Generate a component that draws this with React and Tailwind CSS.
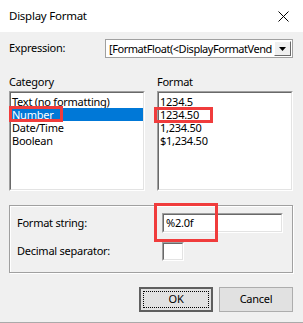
const sunkenOuter = 'border border-t-[#a0a0a0] border-l-[#a0a0a0] border-r-white border-b-white'
const sunkenInner = 'border border-t-[#696969] border-l-[#696969] border-r-[#e3e3e3] border-b-[#e3e3e3] bg-white'

function Sunken({ className = '', innerClassName = '', children }) {
  return (
    <div className={`${sunkenOuter} ${className}`}>
      <div className={`${sunkenInner} h-full w-full ${innerClassName}`}>{children}</div>
    </div>
  )
}

function ListBox({ items, selected, mark }) {
  return (
    <Sunken className="h-[100px] w-full">
      <div className="relative flex flex-col pt-[2px]">
        {items.map((item, i) => (
          <div
            key={item}
            className={`h-[13px] leading-[13px] pl-[1px] whitespace-nowrap ${i === selected ? 'bg-[#0078d7] text-white' : 'text-black'}`}
          >
            {item}
          </div>
        ))}
        {mark}
      </div>
    </Sunken>
  )
}

function Button({ children, isDefault }) {
  return (
    <button
      className={`relative w-[74px] h-[25px] bg-[#e1e1e1] flex items-center justify-center ${
        isDefault ? 'border-2 border-[#5f5f5f]' : 'border border-[#adadad]'
      }`}
    >
      {isDefault && <span className="absolute inset-[2px] border border-dotted border-black" />}
      <span className="relative">{children}</span>
    </button>
  )
}

export default function App() {
  return (
    <div
      className="w-[303px] h-[323px] bg-[#f0f0f0] flex flex-col text-[11px] tracking-[-0.25px] text-black border-b border-[#aaaaaa] overflow-hidden"
      style={{ fontFamily: '"Noto Sans", "Liberation Sans", sans-serif' }}
    >
      {/* Title bar */}
      <div className="h-[32px] bg-white flex items-center justify-between pl-[9px] pr-[14px] shrink-0">
        <span className="text-[11.5px]">Display Format</span>
        <svg width="11" height="11" viewBox="0 0 11 11" className="text-black">
          <path d="M0.5 0.5 L10.5 10.5 M10.5 0.5 L0.5 10.5" stroke="currentColor" strokeWidth="1" />
        </svg>
      </div>

      <div className="flex flex-col pl-[9px] pr-[10px]">
        {/* Expression */}
        <div className="mt-[7px] h-[19px] flex items-center">
          <span className="w-[96px] shrink-0">Expression:</span>
          <div className="flex-1 min-w-0 h-[19px] border border-[#a0a0a0] bg-white flex items-stretch">
            <span className="flex-1 min-w-0 pl-[3px] leading-[17px] tracking-[-0.45px] overflow-hidden whitespace-nowrap">
              [FormatFloat(&lt;DisplayFormatVend
            </span>
            <div className="w-[17px] shrink-0 my-[1px] mr-[1px] border border-t-white border-l-white border-r-[#696969] border-b-[#696969] bg-[#f0f0f0] flex items-center justify-center">
              <svg width="7" height="4" viewBox="0 0 7 4">
                <path d="M0 0 H7 L3.5 4 Z" fill="black" />
              </svg>
            </div>
          </div>
        </div>

        {/* Category / Format */}
        <div className="mt-[17px] grid grid-cols-2 gap-x-[12px]">
          <div className="flex flex-col">
            <span className="h-[16px] leading-[14px]">Category</span>
            <ListBox
              items={['Text (no formatting)', 'Number', 'Date/Time', 'Boolean']}
              selected={1}
              mark={<span className="absolute left-[-2px] top-[13px] w-[54px] h-[16px] border-[3px] border-[#f03c3c]" />}
            />
          </div>
          <div className="flex flex-col">
            <span className="h-[16px] leading-[14px]">Format</span>
            <ListBox
              items={['1234.5', '1234.50', '1,234.50', '$1,234.50']}
              selected={-1}
              mark={<span className="absolute left-[-5px] top-[14px] w-[59px] h-[16px] border-[3px] border-[#f03c3c]" />}
            />
          </div>
        </div>

        {/* Group box */}
        <div className="mt-[14px] h-[68px] border border-[#a0a0a0] shadow-[inset_1px_1px_0_#fff,1px_1px_0_#fff] flex flex-col pl-[7px] pt-[7px]">
          <div className="flex items-center h-[20px]">
            <span className="w-[145px] shrink-0">Format string:</span>
            <div className="relative">
              <Sunken className="w-[121px] h-[20px]" innerClassName="pl-[2px] leading-[16px]">
                %2.0f
              </Sunken>
              <span className="absolute left-[-8px] top-[-10px] w-[64px] h-[39px] border-[3px] border-[#f03c3c]" />
            </div>
          </div>
          <div className="flex items-center h-[19px] mt-[9px]">
            <span className="w-[145px] shrink-0">Decimal separator:</span>
            <Sunken className="w-[22px] h-[19px]" />
          </div>
        </div>

        {/* Buttons */}
        <div className="mt-[14px] flex justify-end gap-[6px]">
          <Button isDefault>OK</Button>
          <Button>Cancel</Button>
        </div>
      </div>
    </div>
  )
}
